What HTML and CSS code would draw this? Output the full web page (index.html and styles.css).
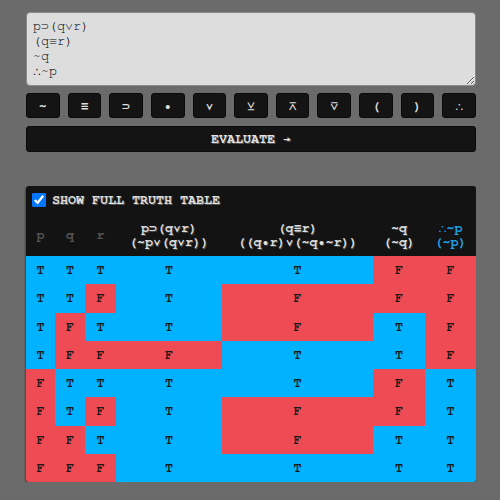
FILE: index.html
```html
<!DOCTYPE html>
<html>
<head>
<meta charset="utf-8">
<link rel="stylesheet" href="styles.css">
</head>
<body>
<div class="app">
  <textarea class="input">p⊃(q∨r)
(q≡r)
~q
∴~p</textarea>
  <div class="keys">
    <button class="key">~</button>
    <button class="key">≡</button>
    <button class="key">⊃</button>
    <button class="key">•</button>
    <button class="key">∨</button>
    <button class="key">⊻</button>
    <button class="key">⊼</button>
    <button class="key">⊽</button>
    <button class="key">(</button>
    <button class="key">)</button>
    <button class="key">∴</button>
  </div>
  <button class="evaluate">EVALUATE →</button>

  <div class="panel">
    <label class="toggle"><input type="checkbox" checked class="check"> SHOW FULL TRUTH TABLE</label>
    <div class="grid">
      <div class="th var">p</div>
      <div class="th var">q</div>
      <div class="th var">r</div>
      <div class="th">p⊃(q∨r)<br>(~p∨(q∨r))</div>
      <div class="th">(q≡r)<br>((q•r)∨(~q•~r))</div>
      <div class="th">~q<br>(~q)</div>
      <div class="th concl">∴~p<br>(~p)</div>

      <div class="t">T</div><div class="t">T</div><div class="t">T</div><div class="t">T</div><div class="t">T</div><div class="f">F</div><div class="f">F</div>
      <div class="t">T</div><div class="t">T</div><div class="f">F</div><div class="t">T</div><div class="f">F</div><div class="f">F</div><div class="f">F</div>
      <div class="t">T</div><div class="f">F</div><div class="t">T</div><div class="t">T</div><div class="f">F</div><div class="t">T</div><div class="f">F</div>
      <div class="t">T</div><div class="f">F</div><div class="f">F</div><div class="f">F</div><div class="t">T</div><div class="t">T</div><div class="f">F</div>
      <div class="f">F</div><div class="t">T</div><div class="t">T</div><div class="t">T</div><div class="t">T</div><div class="f">F</div><div class="t">T</div>
      <div class="f">F</div><div class="t">T</div><div class="f">F</div><div class="t">T</div><div class="f">F</div><div class="f">F</div><div class="t">T</div>
      <div class="f">F</div><div class="f">F</div><div class="t">T</div><div class="t">T</div><div class="f">F</div><div class="t">T</div><div class="t">T</div>
      <div class="f">F</div><div class="f">F</div><div class="f">F</div><div class="t">T</div><div class="t">T</div><div class="t">T</div><div class="t">T</div>
    </div>
  </div>
</div>
</body>
</html>
```
FILE: styles.css
```css
html, body {
  margin: 0;
  background: #6b6b6b;
}
body {
  font-family: FreeMono, "Liberation Mono", monospace;
  font-size: 13.33px;
}
.app {
  width: 450px;
  margin-left: 26px;
  padding-top: 12px;
  display: flex;
  flex-direction: column;
}
.input {
  box-sizing: border-box;
  width: 450px;
  height: 74px;
  margin: 0;
  padding: 6px 6px;
  background: #dddddd;
  color: #000;
  border: 1px solid #8a8a8a;
  border-radius: 4px;
  font-family: FreeMono, "Liberation Mono", monospace;
  font-size: 13.33px;
  line-height: 15px;
  resize: vertical;
  outline: none;
}
.keys {
  display: flex;
  gap: 8px;
  margin-top: 7px;
}
.key {
  flex: 1;
  height: 25px;
  padding: 0;
  background: #141414;
  color: #dcdcdc;
  border: 1px solid #0a0a0a;
  border-radius: 3px;
  font-family: FreeMono, "Liberation Mono", monospace;
  font-weight: bold;
  font-size: 13.33px;
}
.evaluate {
  margin-top: 8px;
  height: 26px;
  background: #141414;
  color: #e2e2e2;
  border: 1px solid #0a0a0a;
  border-radius: 3px;
  font-family: FreeMono, "Liberation Mono", monospace;
  font-weight: bold;
  font-size: 13.33px;
  text-shadow: 1px 1px 0 #555;
}
.panel {
  margin-top: 34px;
  background: #131313;
  border-radius: 3px;
  overflow: hidden;
  box-shadow: -1px 1px 2px rgba(0,0,0,0.35);
}
.toggle {
  display: flex;
  align-items: center;
  gap: 6px;
  height: 28px;
  padding-left: 6px;
  color: #e0e0e0;
  font-weight: bold;
  font-size: 13.33px;
  text-shadow: 1px 1px 0 #555;
}
.check {
  width: 14px;
  height: 14px;
  margin: 0;
}
.grid {
  display: grid;
  grid-template-columns: 29px 30px 31px 106px 151px 52px 1fr;
  grid-template-rows: 42px repeat(8, 28.25px);
}
.th {
  display: flex;
  align-items: center;
  justify-content: center;
  text-align: center;
  color: #dedede;
  font-weight: bold;
  font-size: 13.33px;
  line-height: 14px;
  text-shadow: 1px 1px 0 #444;
}
.th.var {
  color: #555;
  text-shadow: none;
}
.th.concl {
  color: #1ea3e8;
  text-shadow: none;
}
.t, .f {
  display: flex;
  align-items: center;
  justify-content: center;
  color: #1a1a1a;
  font-size: 13.33px;
  font-weight: bold;
}
.t { background: #00b2ff; }
.f { background: #ef4b55; }
```
